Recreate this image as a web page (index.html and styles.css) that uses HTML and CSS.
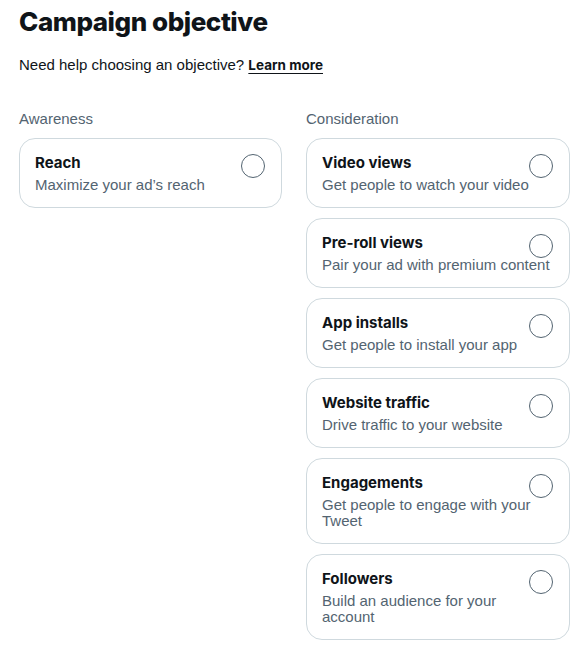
FILE: index.html
```html
<!DOCTYPE html>
<html lang="en">
<head>
<meta charset="utf-8">
<title>Campaign objective</title>
<link rel="stylesheet" href="styles.css">
</head>
<body>
<main class="page">
  <h1 class="title">Campaign objective</h1>
  <p class="help">Need help choosing an objective? <a class="learn" href="#">Learn more</a></p>
  <div class="columns">
    <section class="group">
      <h2 class="group-label">Awareness</h2>
      <div class="card">
        <div class="card-title">Reach</div>
        <div class="card-desc">Maximize your ad’s reach</div>
        <span class="radio"></span>
      </div>
    </section>
    <section class="group">
      <h2 class="group-label">Consideration</h2>
      <div class="card">
        <div class="card-title">Video views</div>
        <div class="card-desc">Get people to watch your video</div>
        <span class="radio"></span>
      </div>
      <div class="card">
        <div class="card-title">Pre-roll views</div>
        <div class="card-desc">Pair your ad with premium content</div>
        <span class="radio"></span>
      </div>
      <div class="card">
        <div class="card-title">App installs</div>
        <div class="card-desc">Get people to install your app</div>
        <span class="radio"></span>
      </div>
      <div class="card">
        <div class="card-title">Website traffic</div>
        <div class="card-desc">Drive traffic to your website</div>
        <span class="radio"></span>
      </div>
      <div class="card">
        <div class="card-title">Engagements</div>
        <div class="card-desc">Get people to engage with your Tweet</div>
        <span class="radio"></span>
      </div>
      <div class="card">
        <div class="card-title">Followers</div>
        <div class="card-desc">Build an audience for your account</div>
        <span class="radio"></span>
      </div>
    </section>
  </div>
</main>
</body>
</html>
```

FILE: styles.css
```css
* { box-sizing: border-box; }
html, body { margin: 0; background: #ffffff; }
body {
  font-family: "Liberation Sans", Arial, sans-serif;
  color: #0f1419;
}
.page {
  padding: 6px 12px 0 19px;
}
.title {
  margin: 0;
  font-family: Inter, "Liberation Sans", sans-serif;
  font-weight: 800;
  font-size: 26px;
  line-height: 32px;
  letter-spacing: -0.45px;
}
.help {
  margin: 17px 0 0;
  font-size: 15px;
  line-height: 20px;
}
.learn {
  color: #0f1419;
  font-weight: 700;
  font-family: Inter, "Liberation Sans", sans-serif;
  font-size: 13.5px;
  text-decoration: underline;
  text-underline-offset: 3px;
}
.columns {
  margin-top: 34px;
  display: grid;
  grid-template-columns: 263px 264px;
  column-gap: 24px;
  align-items: start;
}
.group {
  display: flex;
  flex-direction: column;
  gap: 10px;
}
.group-label {
  margin: 0;
  font-size: 15px;
  font-weight: 400;
  line-height: 20px;
  color: #536471;
}
.group-label + .card {
  margin-top: -1px;
}
.card {
  position: relative;
  border: 1px solid #cfd9de;
  border-radius: 16px;
  padding: 14px 16px 14px 15px;
}
.card-title {
  font-family: Inter, "Liberation Sans", sans-serif;
  font-weight: 700;
  font-size: 15px;
  line-height: 20px;
}
.card-desc {
  margin-top: 4px;
  font-size: 15px;
  line-height: 16px;
  color: #536471;
  max-width: 229px;
}
.radio {
  position: absolute;
  top: 15px;
  right: 16px;
  width: 24px;
  height: 24px;
  border: 1px solid #536471;
  border-radius: 50%;
}
```
